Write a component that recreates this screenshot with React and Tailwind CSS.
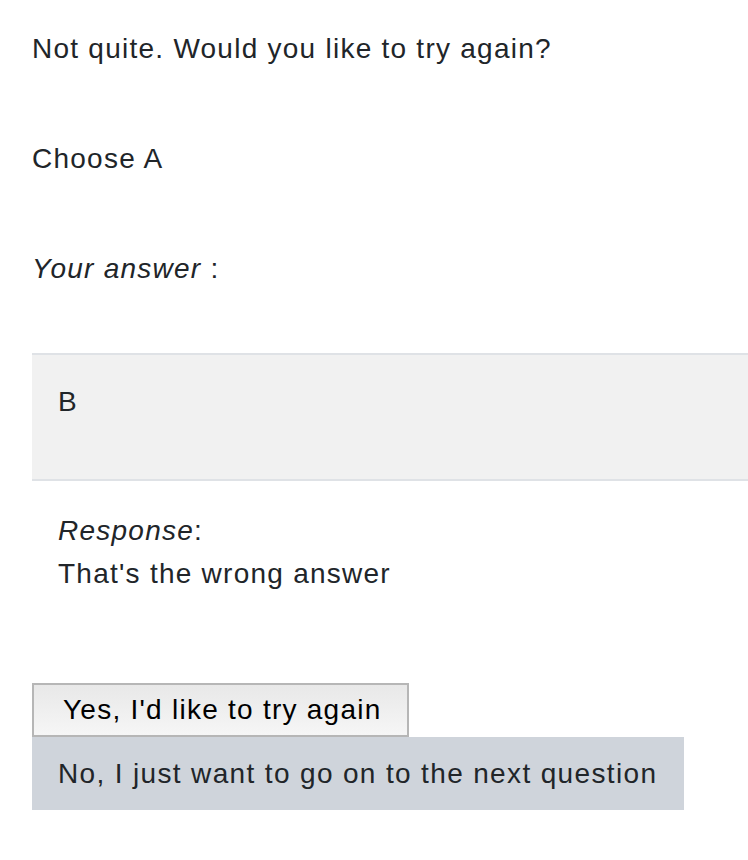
import React from 'react'

const App = () => {
  return (
    <div className="min-h-screen bg-white text-[#212529] font-['Liberation_Sans',Arial,sans-serif] text-[28px] tracking-[1.25px] leading-[39px] pl-[32px] pt-[29px]">
      {/* Feedback prompt */}
      <p className="m-0">Not quite. Would you like to try again?</p>
      <p className="mt-[71px]">Choose A</p>
      <p className="mt-[71px]">
        <em>Your answer</em> :
      </p>

      {/* Answer box */}
      <div className="mt-[65px] bg-[#f1f1f1] border-y-2 border-[#dfe2e6] h-[128px] pl-[26px] pt-[27px]">
        B
      </div>

      {/* Response */}
      <div className="pl-[26px] pt-[28px] leading-[43px]">
        <div>
          <em>Response</em>:
        </div>
        <div>That's the wrong answer</div>
      </div>

      {/* Actions */}
      <div className="mt-[88px] flex flex-col items-start">
        <button className="h-[54px] pl-[29px] pr-[25px] border-2 border-[#b6b6b6] bg-gradient-to-b from-[#e8e8e8] to-[#f6f6f6] text-black leading-none">
          Yes, I'd like to try again
        </button>
        <button className="h-[73px] pl-[26px] pr-[27px] bg-[#cfd4db] text-[#212529] tracking-[1.35px] leading-none">
          No, I just want to go on to the next question
        </button>
      </div>
    </div>
  )
}

export default App
